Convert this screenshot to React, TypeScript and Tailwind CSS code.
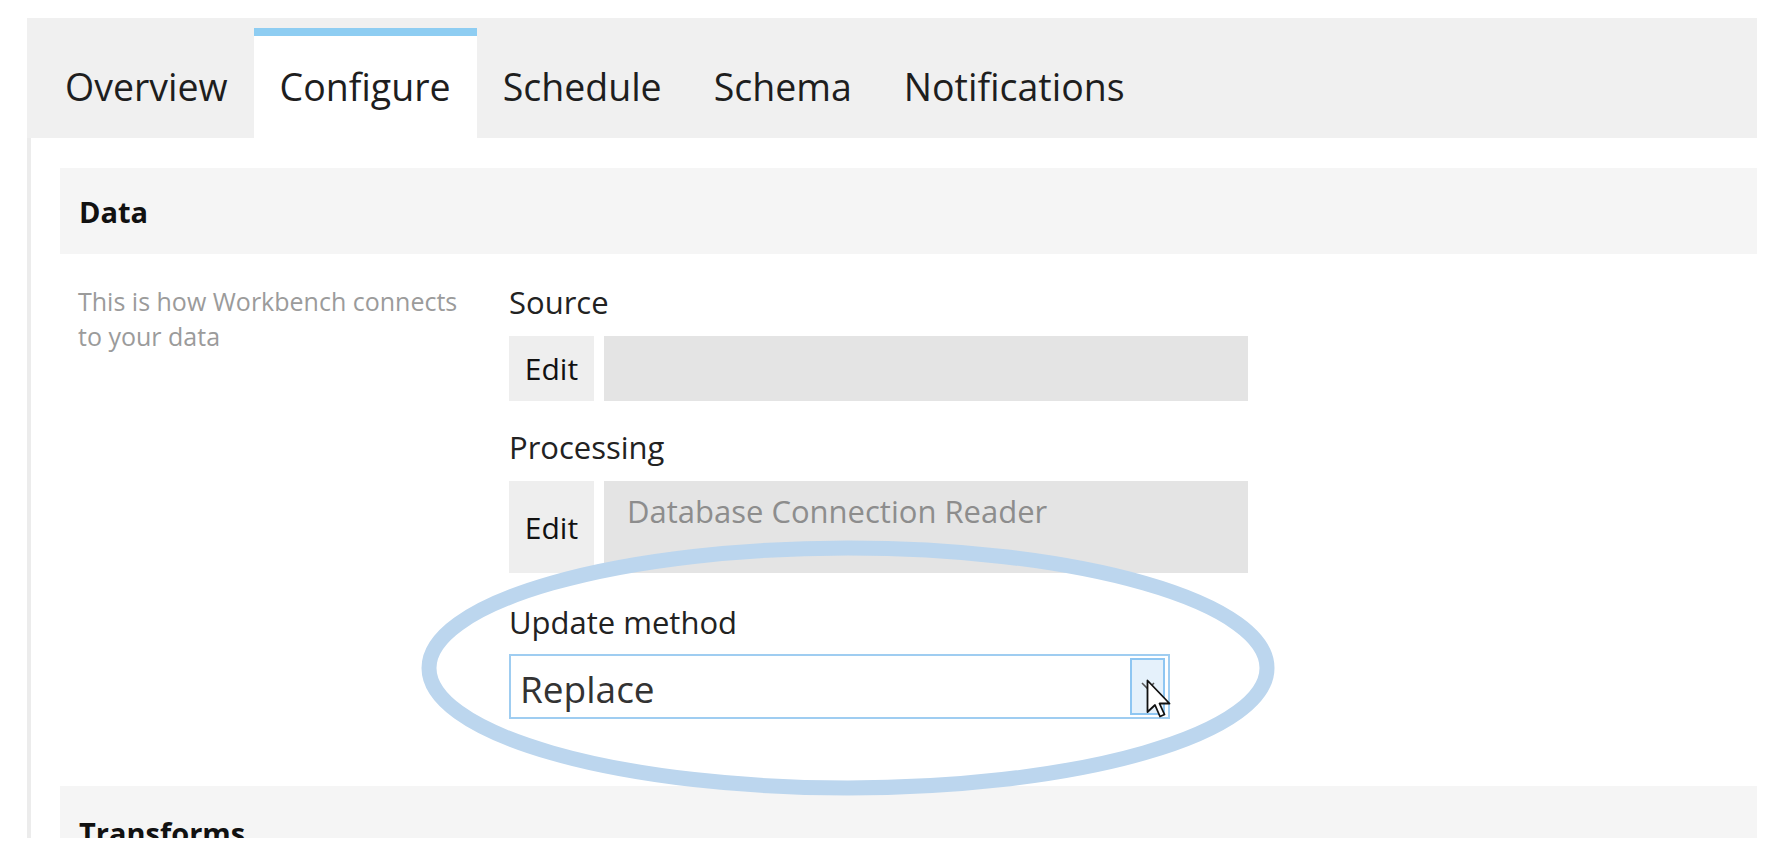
import React from "react"

const tabs = ["Overview", "Configure", "Schedule", "Schema", "Notifications"]

function Tab({ label, active }: { label: string; active: boolean }) {
  return (
    <div
      className={
        active
          ? "flex h-[110px] items-center border-t-[8px] border-[#8ecdf2] bg-white px-[26px]"
          : "flex h-[110px] items-center border-t-[8px] border-transparent px-[26px]"
      }
    >
      <span className="text-[37.5px] leading-none text-[#1e1e1e]">{label}</span>
    </div>
  )
}

function EditRow({ tall, value }: { tall?: boolean; value?: string }) {
  return (
    <div className={tall ? "mt-[14px] flex h-[92px]" : "mt-[14px] flex h-[65px]"}>
      <div className="flex w-[85px] items-center justify-center bg-[#eeeeee] text-[30px] text-[#111]">Edit</div>
      <div className="ml-[10px] w-[644px] bg-[#e4e4e4] pl-[23px] pt-[10px] text-[31px] leading-[40px] text-[#8d8d8d]">
        {value}
      </div>
    </div>
  )
}

export default function App() {
  return (
    <div
      className="relative h-[868px] w-full overflow-hidden bg-white"
      style={{ fontFamily: "'Open Sans', 'Noto Sans', sans-serif" }}
    >
      <div className="pl-[27px] pr-[23px] pt-[18px]">
        {/* Tab strip */}
        <div className="flex h-[120px] items-end bg-[#f0f0f0] pl-[12px]">
          {tabs.map((t) => (
            <Tab key={t} label={t} active={t === "Configure"} />
          ))}
        </div>

        {/* Page body */}
        <div className="h-[700px] overflow-hidden border-l-4 border-[#ececec] pl-[29px] pt-[30px]">
          <div className="flex h-[86px] items-center bg-[#f5f5f5] pl-[19px] pt-[2px] text-[29px] font-bold text-[#111]">
            Data
          </div>

          <div className="flex pt-[28px]">
            <div className="w-[449px] pl-[18px] pr-[31px]">
              <p className="mt-[2px] text-[25px] leading-[35px] text-[#9b9b9b]">
                This is how Workbench connects to your data
              </p>
            </div>

            <div className="flex flex-col">
              <div className="text-[31px] leading-[40px] text-[#222]">Source</div>
              <EditRow />

              <div className="mt-[26px] text-[31px] leading-[40px] text-[#222]">Processing</div>
              <EditRow tall value="Database Connection Reader" />

              <div className="mt-[29px] text-[31px] leading-[40px] text-[#222]">Update method</div>
              <div className="mt-[12px] flex h-[65px] w-[661px] items-center border-2 border-[#9fcdf1] pl-[9px] pr-[3px]">
                <span className="pt-1 text-[37px] leading-none text-[#333]">Replace</span>
                <div className="ml-auto flex h-[57px] w-[35px] items-center justify-center border-2 border-[#8ec6f2] bg-[#e5f1fb]">
                  <svg width="14" height="9" viewBox="0 0 14 9" fill="none" stroke="#555" strokeWidth="1.6">
                    <path d="M1 1l6 6 6-6" />
                  </svg>
                </div>
              </div>
            </div>
          </div>

          <div className="mt-[67px] flex h-[86px] items-center bg-[#f5f5f5] pl-[19px] pt-[7px] text-[29px] font-bold text-[#111]">
            Transforms
          </div>
        </div>
      </div>

      {/* highlight ring */}
      <svg
        className="pointer-events-none absolute left-0 top-0"
        width="1780"
        height="868"
        viewBox="0 0 1780 868"
        fill="none"
      >
        <ellipse cx="848" cy="668" rx="419" ry="120" stroke="#bcd6ee" strokeWidth="15" />
      </svg>

      {/* mouse pointer */}
      <svg className="pointer-events-none absolute left-[1146px] top-[679px]" width="28" height="44" viewBox="0 0 28 44">
        <path
          d="M1.5 1.5 L1.5 33 L9 26 L14 37.5 L18.5 35.5 L13.5 24.5 L23.5 24.5 Z"
          fill="#fff"
          stroke="#111"
          strokeWidth="1.8"
          strokeLinejoin="round"
        />
      </svg>
    </div>
  )
}
